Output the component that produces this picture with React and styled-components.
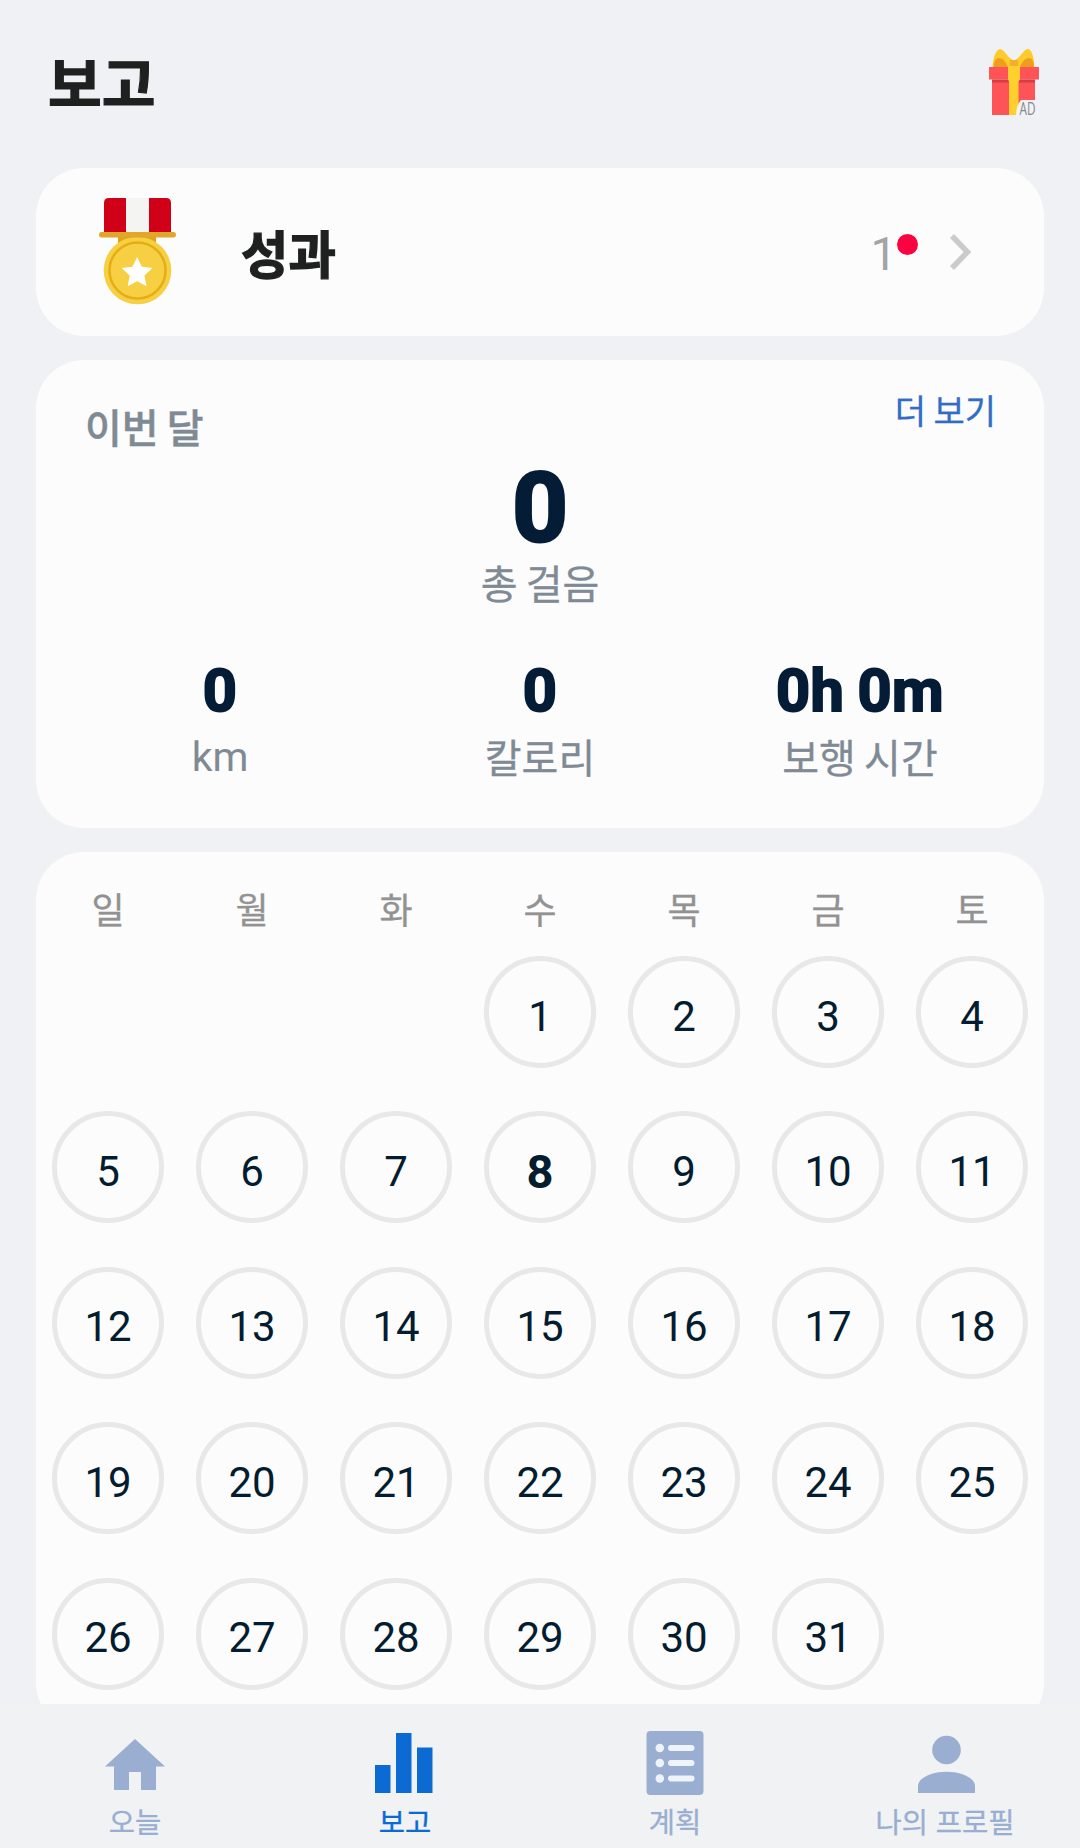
import React from "react";
import styled, { createGlobalStyle } from "styled-components";

const cjk = `"Noto Sans CJK KR", sans-serif`;

const GlobalStyle = createGlobalStyle`
  * { box-sizing: border-box; }
  html, body { margin: 0; background: #f0f1f5; }
  body { font-family: ${cjk}; overflow: hidden; }
`;

const Screen = styled.div`
  width: 1080px;
  height: 1848px;
  display: flex;
  flex-direction: column;
  background: #f0f1f5;
  overflow: hidden;
`;

const Header = styled.header`
  flex: none;
  height: 168px;
  padding: 0 40px 4px 48px;
  display: flex;
  justify-content: space-between;
  align-items: center;
`;

const Title = styled.h1`
  margin: 0 0 2px;
  font-size: 58.4px;
  line-height: 60px;
  font-weight: 700;
  color: #1f2020;
  -webkit-text-stroke: 1.2px currentColor;
`;

const GiftButton = styled.button`
  width: 52px;
  height: 68px;
  padding: 0;
  border: 0;
  background: none;
  display: block;

  svg { display: block; overflow: visible; }
`;

const Content = styled.main`
  flex: 1;
  min-height: 0;
  overflow: hidden;
  padding: 0 36px;
  display: flex;
  flex-direction: column;
  gap: 24px;
`;

const Card = styled.section`
  flex: none;
  background: #fcfcfc;
  border-radius: 48px;
`;

const AchievementCard = styled(Card)`
  height: 168px;
  padding: 0 71px 0 62px;
  display: flex;
  align-items: center;
`;

const AchievementTitle = styled.h2`
  margin: 0 auto 0 63px;
  font-size: 51.5px;
  line-height: 60px;
  font-weight: 700;
  color: #1f2020;
  -webkit-text-stroke: 1.3px currentColor;
`;

const Count = styled.span`
  margin-top: 3px;
  font-family: Roboto, sans-serif;
  font-size: 47px;
  line-height: 60px;
  color: #a3a4a6;
`;

const Dot = styled.i`
  width: 21px;
  height: 21px;
  margin: 0 31px 15px 0;
  border-radius: 50%;
  background: #fb0341;
`;

const SummaryCard = styled(Card)`
  height: 468px;
  padding: 28px 48px 0;
  display: flex;
  flex-direction: column;
  word-spacing: -3px;
`;

const SummaryHead = styled.div`
  height: 60px;
  display: flex;
  justify-content: space-between;
  align-items: flex-start;
`;

const Period = styled.h3`
  margin: 8px 0 0 1px;
  font-size: 40px;
  line-height: 60px;
  font-weight: 500;
  color: #7f8a95;
  -webkit-text-stroke: 0.5px currentColor;
`;

const MoreLink = styled.a`
  font-size: 34px;
  line-height: 44px;
  word-spacing: -2px;
  color: #326dc5;
  -webkit-text-stroke: 0.3px currentColor;
`;

const Stat = styled.div`
  display: flex;
  flex-direction: column;
  align-items: center;
`;

const StatValue = styled.strong`
  padding-top: ${(p) => (p.$large ? 12 : 8)}px;
  font-family: Roboto, sans-serif;
  font-size: ${(p) => (p.$large ? 97 : 59.5)}px;
  line-height: ${(p) => (p.$large ? 97 : 79)}px;
  font-weight: 700;
  word-spacing: -2px;
  letter-spacing: ${(p) => (p.$large ? 0 : 0.4)}px;
  color: #041c36;
  -webkit-text-stroke: ${(p) => (p.$large ? 3 : 2)}px currentColor;
`;

const StatLabel = styled.span`
  padding-top: ${(p) => (p.$latin ? 1 : 0)}px;
  font-family: ${(p) => (p.$latin ? "Roboto, sans-serif" : cjk)};
  font-size: ${(p) => (p.$latin ? 41 : 40)}px;
  line-height: 50px;
  color: #7f8a95;
  -webkit-text-stroke: ${(p) => (p.$latin ? 0 : 0.3)}px currentColor;
`;

const StatGrid = styled.div`
  margin: 37px -24px 0;
  display: grid;
  grid-template-columns: repeat(3, 320px);
`;

const CalendarCard = styled(Card)`
  height: 879px;
  padding: 34px 0 0;
`;

const WeekHeader = styled.div`
  height: 70px;
  display: grid;
  grid-template-columns: repeat(7, 144px);
  justify-items: center;
  font-size: 36px;
  line-height: 44px;
  color: #929292;
  -webkit-text-stroke: 0.3px currentColor;
`;

const Days = styled.div`
  display: grid;
  grid-template-columns: repeat(7, 144px);
  grid-auto-rows: 155.4px;
  justify-items: center;
`;

const Day = styled.div`
  width: 112px;
  height: 112px;
  padding-top: 8px;
  border: 5px solid #e8e8e8;
  border-radius: 50%;
  display: flex;
  align-items: center;
  justify-content: center;
  grid-column-start: ${(p) => p.$start || "auto"};
  font-family: Roboto, sans-serif;
  font-size: ${(p) => (p.$today ? 47 : 42)}px;
  font-weight: ${(p) => (p.$today ? 700 : 400)};
  color: #041c30;
`;

const NavBar = styled.nav`
  flex: none;
  height: 144px;
  display: grid;
  grid-template-columns: repeat(4, 1fr);
  background: #f0f2f4;
`;

const NavItem = styled.a`
  padding-top: 25px;
  display: flex;
  flex-direction: column;
  align-items: center;
  gap: 5px;
  font-size: 28.5px;
  line-height: 42px;
  color: ${(p) => (p.$active ? "#0b6bd3" : "#99aed0")};
  -webkit-text-stroke: 0.3px currentColor;

  svg { display: block; fill: currentColor; flex: none; }
`;

const AdText = styled.text`
  font-family: "Open Sans", sans-serif;
  font-size: 18.5px;
  font-weight: 500;
  fill: #85888b;
`;

const GiftIcon = () => (
  <svg width="52" height="68" viewBox="0 0 52 68">
    <path d="M5 20C4 12 8 1 12 1c4 0 8 9 13 11h2C32 10 36 1 40 1c4 0 7 11 6 19z" fill="#fecb2c" />
    <path d="M5.500 19C6 13 8 10 11 10c4 0 7 4 9 9zM46 19c0-6-2-9-5-9-4 0-7 4-9 9z" fill="#ef9d1e" />
    <path d="M4 32h43v35H4z" fill="#fe5457" />
    <path d="M1 19h50v12.500H1z" fill="#fe5457" />
    <path d="M4 31.500h43v3H4z" fill="#d73c44" />
    <path d="M20 19l2-7h8l2 7v12l-1.500 3v33H21V34l-1-3z" fill="#fecf2d" />
    <path d="M22 12h8l.5 6h-9z" fill="#f0b02a" />
    <path d="M52 52H33q-5 5-5 16h24z" fill="#f1f2f5" />
    <AdText x="31.500" y="67" textLength="16" lengthAdjust="spacingAndGlyphs">AD</AdText>
  </svg>
);

const Medal = styled.svg`
  margin-bottom: 2px;
`;

const MedalIcon = () => (
  <Medal width="80" height="108" viewBox="0 0 80 108">
    <path d="M6 36V6q0-5 5-5h17v35zM51 36V1h17q5 0 5 5v30z" fill="#d00018" />
    <path d="M28 1h23v35H28z" fill="#f4f4f3" />
    <path d="M20 38h38v8H20z" fill="#dfa51b" />
    <circle cx="39.500" cy="73.500" r="33.800" fill="#f6cf42" />
    <rect x="1" y="35" width="77" height="5.500" rx="2.700" fill="#e1a62a" />
    <circle cx="39.500" cy="73.500" r="28" fill="none" stroke="#e5ae17" strokeWidth="2.500" />
    <path d="M39.200 60l4.600 9.800 10.700 1.300-8 7.400 2 10.700-9.300-5-9.500 5 2-10.700-8-7.400 10.800-1.300z" fill="#fff" />
  </Medal>
);

const ChevronIcon = () => (
  <svg width="24" height="38" viewBox="0 0 24 38">
    <path d="M3 3l15.500 16L3 35" fill="none" stroke="#cbcbcb" strokeWidth="5.500" />
  </svg>
);

const HomeIcon = () => (
  <svg width="60" height="66" viewBox="0 0 60 66">
    <path d="M30 10L60 37.500h-9V61H36V43H24v18H9V37.500H0z" />
  </svg>
);

const ReportIcon = () => (
  <svg width="60" height="66" viewBox="0 0 60 66">
    <path d="M0 36h15.500v28H0zM21 4h15.500v60H21zM42 18.500h15.500V64H42z" />
  </svg>
);

const PlanIcon = () => (
  <svg width="58" height="66" viewBox="0 0 58 66">
    <rect x="0.500" y="2" width="57" height="64" rx="4" />
    <g fill="#eff4fb">
      {[19, 34, 49.5].map((y) => (
        <React.Fragment key={y}>
          <circle cx="13.800" cy={y} r="4.300" />
          <rect x="22" y={y - 3} width="26.500" height="6" rx="3" />
        </React.Fragment>
      ))}
    </g>
  </svg>
);

const ProfileIcon = () => (
  <svg width="60" height="66" viewBox="0 0 60 66">
    <circle cx="31.500" cy="21" r="14.300" />
    <path d="M3 64V57C3 49 16.500 42.700 31.500 42.700S60 49 60 57v7z" />
  </svg>
);

const WEEKDAYS = ["일", "월", "화", "수", "목", "금", "토"];
const TODAY = 8;
const FIRST_COLUMN = 4;
const DAYS = Array.from({ length: 31 }, (_, i) => i + 1);

const STATS = [
  { value: "0", label: "km", latin: true },
  { value: "0", label: "칼로리" },
  { value: "0h 0m", label: "보행 시간" },
];

const TABS = [
  { label: "오늘", Icon: HomeIcon },
  { label: "보고", Icon: ReportIcon, active: true },
  { label: "계획", Icon: PlanIcon },
  { label: "나의 프로필", Icon: ProfileIcon },
];

export default function App() {
  return (
    <Screen lang="ko">
      <GlobalStyle />
      <Header>
        <Title>보고</Title>
        <GiftButton><GiftIcon /></GiftButton>
      </Header>
      <Content>
        <AchievementCard>
          <MedalIcon />
          <AchievementTitle>성과</AchievementTitle>
          <Count>1</Count>
          <Dot />
          <ChevronIcon />
        </AchievementCard>
        <SummaryCard>
          <SummaryHead>
            <Period>이번 달</Period>
            <MoreLink>더 보기</MoreLink>
          </SummaryHead>
          <Stat>
            <StatValue $large>0</StatValue>
            <StatLabel>총 걸음</StatLabel>
          </Stat>
          <StatGrid>
            {STATS.map((s) => (
              <Stat key={s.label}>
                <StatValue>{s.value}</StatValue>
                <StatLabel $latin={s.latin}>{s.label}</StatLabel>
              </Stat>
            ))}
          </StatGrid>
        </SummaryCard>
        <CalendarCard>
          <WeekHeader>
            {WEEKDAYS.map((d) => <span key={d}>{d}</span>)}
          </WeekHeader>
          <Days>
            {DAYS.map((d) => (
              <Day key={d} $today={d === TODAY} $start={d === 1 ? FIRST_COLUMN : undefined}>{d}</Day>
            ))}
          </Days>
        </CalendarCard>
      </Content>
      <NavBar>
        {TABS.map(({ label, Icon, active }) => (
          <NavItem key={label} $active={active}>
            <Icon />
            {label}
          </NavItem>
        ))}
      </NavBar>
    </Screen>
  );
}
